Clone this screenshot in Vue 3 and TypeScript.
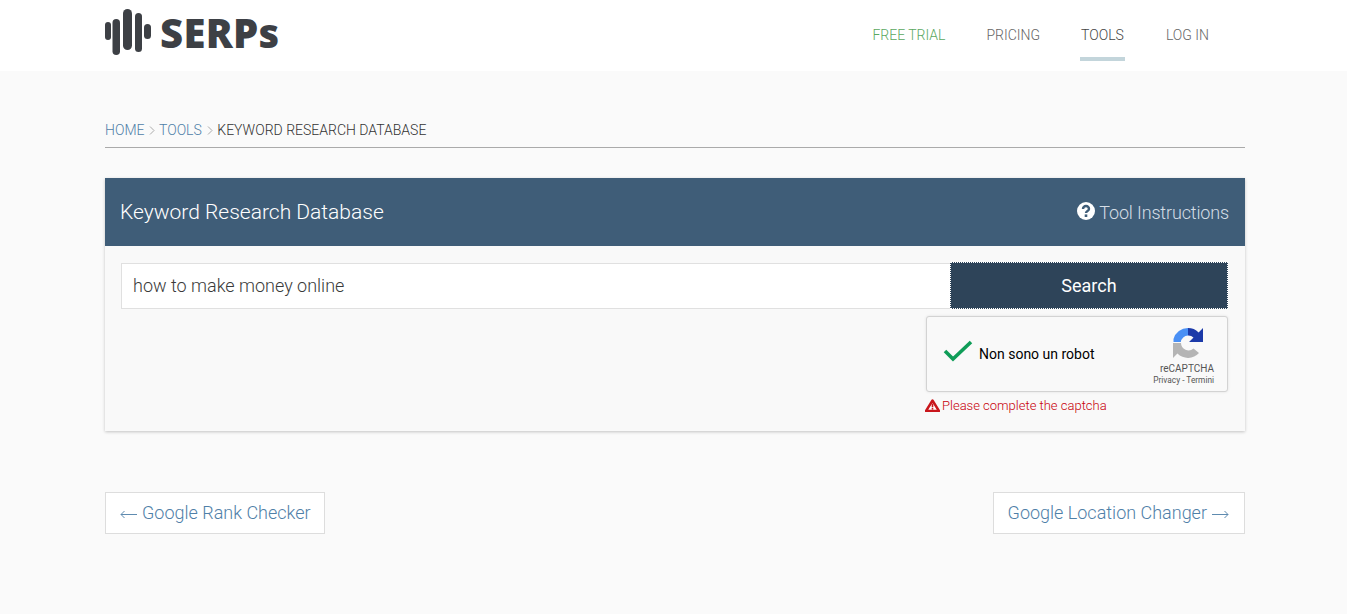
<script setup lang="ts">
const nav = [
  { label: 'FREE TRIAL', cls: 'trial' },
  { label: 'PRICING', cls: '' },
  { label: 'TOOLS', cls: 'active' },
  { label: 'LOG IN', cls: '' },
]
</script>

<template>
  <div class="page">
    <header class="header">
      <div class="container header-in">
        <div class="logo">
          <svg class="mark" width="46" height="46" viewBox="0 0 46 46" fill="#3d4045">
            <rect x="0" y="13" width="6" height="18" rx="3" />
            <rect x="7.500" y="10" width="7.500" height="36" rx="3.750" />
            <rect x="18" y="0" width="9" height="41" rx="4.500" />
            <rect x="30" y="4" width="7" height="39" rx="3.500" />
            <rect x="39" y="15" width="7" height="15" rx="3.500" />
          </svg>
          <span class="logo-text">SERPs</span>
        </div>
        <nav class="nav">
          <a v-for="n in nav" :key="n.label" class="nav-item" :class="n.cls">{{ n.label }}</a>
        </nav>
      </div>
    </header>

    <main class="container">
      <div class="crumbs">
        <a>HOME</a>
        <svg class="sep" width="6" height="9" viewBox="0 0 6 9"><path d="M1 .5l4 4-4 4" fill="none" stroke="#aaa" /></svg>
        <a>TOOLS</a>
        <svg class="sep" width="6" height="9" viewBox="0 0 6 9"><path d="M1 .5l4 4-4 4" fill="none" stroke="#aaa" /></svg>
        <span class="cur">KEYWORD RESEARCH DATABASE</span>
      </div>

      <section class="card">
        <div class="card-head">
          <h1>Keyword Research Database</h1>
          <div class="help">
            <svg width="18" height="18" viewBox="0 0 18 18">
              <circle cx="9" cy="9" r="9" fill="#fff" />
              <path d="M6 7a3 3 0 0 1 6 0c0 2-3 2-3 4" fill="none" stroke="#3f5d78" stroke-width="2.400" />
              <rect x="7.700" y="12.400" width="2.600" height="2.600" fill="#3f5d78" />
            </svg>
            <span>Tool Instructions</span>
          </div>
        </div>
        <div class="card-body">
          <div class="search">
            <div class="input">how to make money online</div>
            <button class="btn">Search</button>
          </div>
          <div class="captcha-col">
            <div class="captcha">
              <svg class="check" width="30" height="24" viewBox="0 0 30 24">
                <path d="M2 12l8 8L28 3" fill="none" stroke="#0f9d58" stroke-width="3.600" />
              </svg>
              <span class="robot">Non sono un robot</span>
              <div class="rc">
                <svg width="30" height="30" viewBox="0 0 30 30">
                  <path d="M15 0A15 15 0 0 1 25.600 4.400L30 0V14H16L20.500 9.500A7.500 7.500 0 0 0 15 7.500z" fill="#1c3aa9" />
                  <path d="M15 0A15 15 0 0 0 .5 11V14H7.800A7.500 7.500 0 0 1 15 7.500z" fill="#4a90f5" />
                  <path d="M0 15H8A7.500 7.500 0 0 0 20.500 20.500L26 25A15 15 0 0 1 4.400 25.600L0 30z" fill="#b5b5b5" />
                </svg>
                <div class="rc-name">reCAPTCHA</div>
                <div class="rc-links">Privacy - Termini</div>
              </div>
            </div>
            <div class="err">
              <svg width="15" height="13" viewBox="0 0 15 13">
                <path d="M7.500 1.500L14 12H1z" fill="#fff" stroke="#c9161c" stroke-width="2.400" stroke-linejoin="round" />
                <rect x="6.700" y="4.500" width="1.600" height="3.800" fill="#c9161c" />
                <rect x="6.700" y="9" width="1.600" height="1.600" fill="#c9161c" />
              </svg>
              <span>Please complete the captcha</span>
            </div>
          </div>
        </div>
      </section>

      <div class="pager">
        <a class="pg prev">
          <svg class="arrow" width="17" height="9" viewBox="0 0 17 9"><path d="M17 4.500H1M4.500 1L1 4.500 4.500 8" fill="none" stroke="#5f8bb0" /></svg>
          <span>Google Rank Checker</span>
        </a>
        <a class="pg next">
          <span>Google Location Changer</span>
          <svg class="arrow" width="17" height="9" viewBox="0 0 17 9"><path d="M0 4.500H16M12.500 1L16 4.500 12.500 8" fill="none" stroke="#5f8bb0" /></svg>
        </a>
      </div>
    </main>
  </div>
</template>

<style>
html, body { margin: 0; background: #fafafa; }
</style>

<style scoped>
.page {
  min-height: 614px;
  background: #fafafa;
  font-family: Roboto, "Liberation Sans", sans-serif;
  color: #444;
}
.container { width: 1140px; margin-left: 105px; }
.header { height: 71px; background: #fff; }
.header-in { display: flex; justify-content: space-between; align-items: flex-start; height: 71px; }
.logo { display: flex; align-items: flex-start; padding-top: 9px; }
.mark { display: block; }
.logo-text {
  font-family: "Open Sans", sans-serif;
  font-weight: 800;
  font-size: 40px;
  line-height: 46px;
  color: #3d4045;
  margin-left: 9px;
  letter-spacing: 0.300px;
  margin-top: 1px;
}
.nav { display: flex; padding-right: 35px; }
.nav-item {
  display: block;
  margin-left: 39px;
  padding: 0 1px;
  height: 57px;
  line-height: 70px;
  font-size: 14px;
  font-weight: 300;
  color: #666;
  border-bottom: 4px solid transparent;
}
.nav-item:last-child { margin-left: 40px; }
.nav-item.trial { color: #5aa85f; }
.nav-item.active { color: #444; border-bottom-color: #c3d5db; }

.crumbs {
  margin-top: 51px;
  height: 25px;
  line-height: 16px;
  font-size: 14px;
  display: flex;
  align-items: flex-start;
  border-bottom: 1px solid #aaa;
  font-weight: 300;
}
.crumbs a { color: #4f80a8; }
.sep { margin: 4px 3.500px 0 5px; display: block; }
.cur { color: #333; margin-left: 1px; }

.card {
  margin-top: 30px;
  height: 253px;
  background: #f9f9f9;
  box-shadow: 0 1px 3px rgba(0, 0, 0, 0.22);
}
.card-head {
  height: 68px;
  background: #3f5d78;
  display: flex;
  align-items: center;
  justify-content: space-between;
  padding: 0 16px 0 15px;
  color: #fff;
}
.card-head h1 { margin: 0; font-size: 21px; font-weight: 300; }
.help { display: flex; align-items: center; gap: 4px; font-size: 18px; font-weight: 300; color: #d5dee6; }
.help svg { display: block; margin-top: -3px; }
.help span { letter-spacing: -0.150px; }
.card-body { padding: 16px 17px 0 16px; }
.search { display: flex; height: 47px; }
.input {
  flex: 1;
  box-sizing: border-box;
  margin-top: 1px;
  background: #fff;
  border: 1px solid #e0e0e0;
  border-right: 0;
  padding-left: 11px;
  line-height: 44px;
  font-size: 18px;
  font-weight: 300;
  color: #3a3a3a;
}
.btn {
  width: 278px;
  box-sizing: border-box;
  background: #2e4459;
  border: 1px dotted #fff;
  color: #fff;
  font-family: inherit;
  font-size: 18px;
  padding: 0;
}
.captcha-col { width: 303px; margin-left: auto; margin-top: 7px; }
.captcha {
  box-sizing: border-box;
  width: 302px;
  margin-left: 1px;
  height: 76px;
  background: #f9f9f9;
  border: 1px solid #d3d3d3;
  border-radius: 3px;
  box-shadow: 0 0 3px rgba(0, 0, 0, 0.1);
  display: flex;
  align-items: center;
  position: relative;
}
.check { margin-left: 16px; margin-top: -6px; }
.robot { margin-left: 6px; font-size: 14px; color: #000; }
.rc {
  position: absolute;
  right: 13px;
  top: 11px;
  width: 70px;
  display: flex;
  flex-direction: column;
  align-items: flex-end;
}
.rc svg { margin-right: 11px; }
.rc-name { font-size: 10px; color: #555; margin-top: 4px; line-height: 13px; }
.rc-links { font-size: 8.300px; color: #555; line-height: 11px; white-space: nowrap; }
.err {
  display: flex;
  align-items: center;
  gap: 2px;
  margin-top: 6px;
  font-size: 13px;
  font-weight: 300;
  color: #c8000a;
  line-height: 15px;
}
.pager { display: flex; justify-content: space-between; margin-top: 61px; }
.pg {
  box-sizing: border-box;
  height: 42px;
  line-height: 40px;
  background: #fff;
  border: 1px solid #ddd;
  font-size: 18px;
  font-weight: 300;
  color: #4f80a8;
  display: flex;
  align-items: center;
  gap: 5px;
}
.prev { padding: 0 13px 0 14px; }
.next { padding: 0 15px 0 14px; }
.arrow { display: block; margin-top: 2px; }
</style>
